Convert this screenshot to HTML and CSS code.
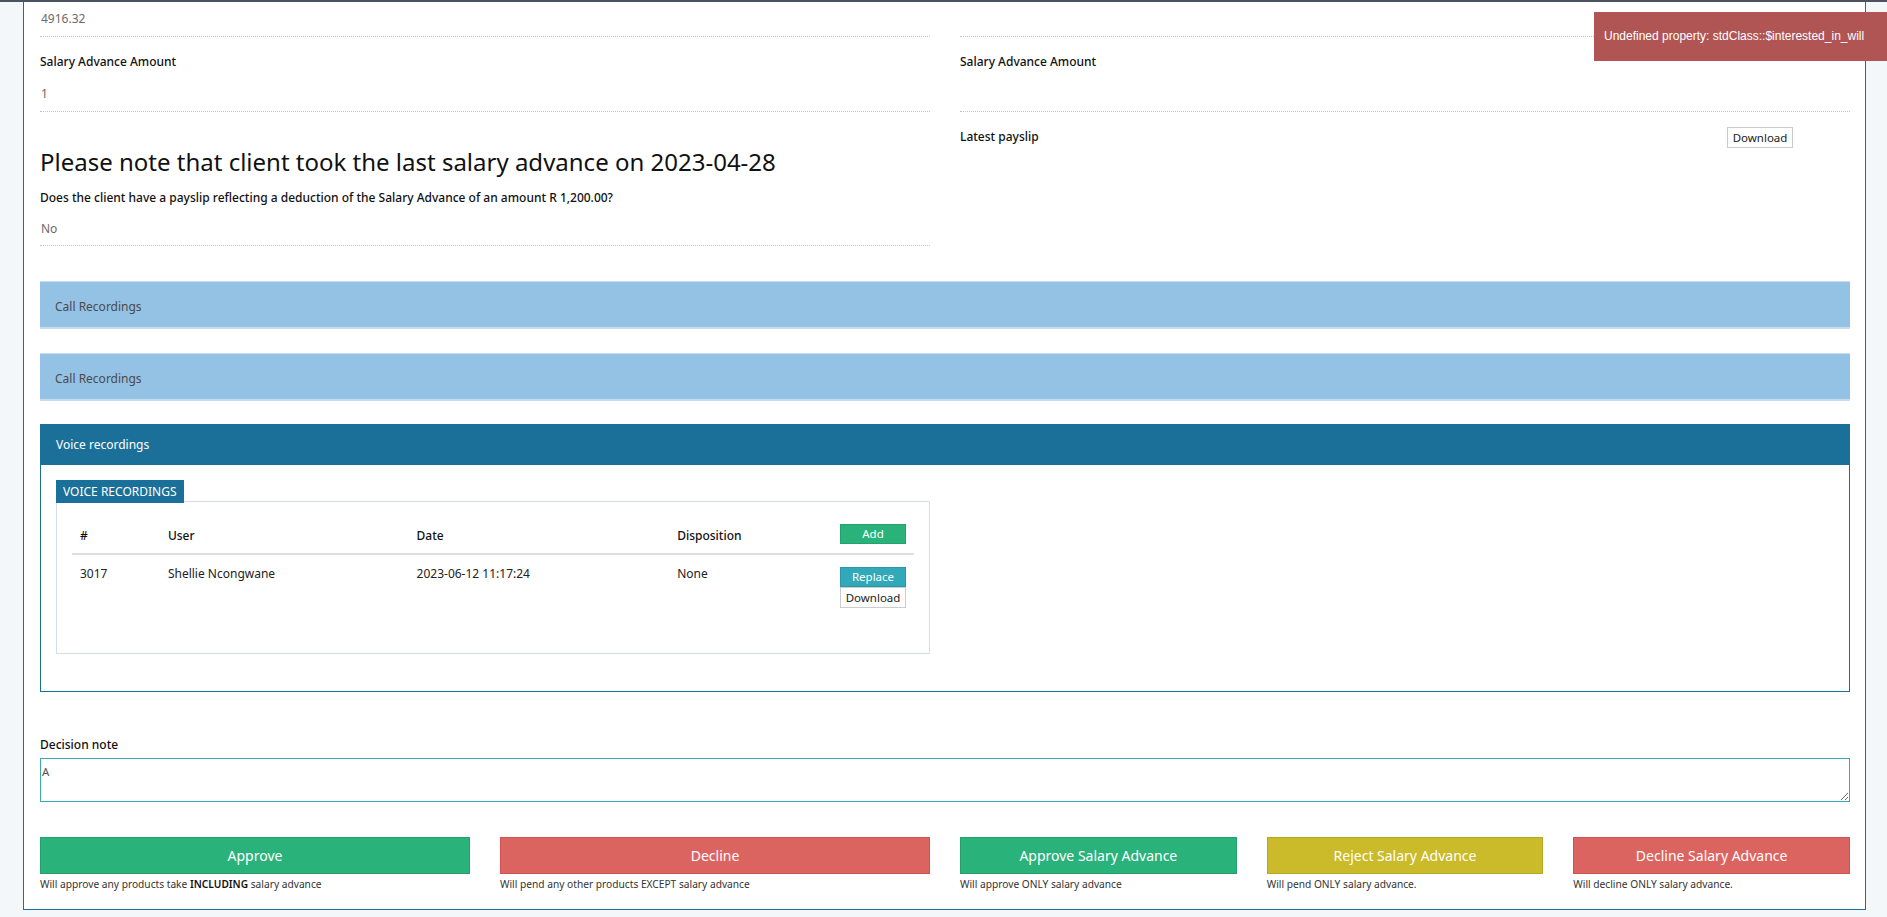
FILE: index.html
```html
<!DOCTYPE html>
<html lang="en">
<head>
<meta charset="utf-8">
<title>Salary Advance Review</title>
<link rel="stylesheet" href="styles.css">
</head>
<body>
<div class="toast">Undefined property: stdClass::$interested_in_will</div>
<main class="sheet">
  <div class="cols">
    <div class="col">
      <div class="field field-first"><div class="value">4916.32</div></div>
      <div class="field"><div class="label">Salary Advance Amount</div><div class="value">1</div></div>
      <h3 class="notice">Please note that client took the last salary advance on 2023-04-28</h3>
      <div class="field field-q"><div class="label">Does the client have a payslip reflecting a deduction of the Salary Advance of an amount R 1,200.00?</div><div class="value">No</div></div>
    </div>
    <div class="col">
      <div class="field field-first"><div class="value"></div></div>
      <div class="field"><div class="label">Salary Advance Amount</div><div class="value"></div></div>
      <div class="payslip"><span class="label payslip-label">Latest payslip</span><button class="btn btn-default">Download</button></div>
    </div>
  </div>

  <div class="bar">Call Recordings</div>
  <div class="bar">Call Recordings</div>

  <section class="panel">
    <div class="panel-head">Voice recordings</div>
    <div class="panel-body">
      <div class="fieldset">
        <div class="legend">VOICE RECORDINGS</div>
        <div class="box">
          <table class="rec-table">
            <thead>
              <tr>
                <th class="c-id">#</th>
                <th class="c-user">User</th>
                <th class="c-date">Date</th>
                <th class="c-disp">Disposition</th>
                <th class="c-act"><button class="btn btn-green btn-xs">Add</button></th>
              </tr>
            </thead>
            <tbody>
              <tr>
                <td>3017</td>
                <td>Shellie Ncongwane</td>
                <td>2023-06-12 11:17:24</td>
                <td>None</td>
                <td class="act-cell">
                  <button class="btn btn-teal btn-xs">Replace</button>
                  <button class="btn btn-default btn-xs">Download</button>
                </td>
              </tr>
            </tbody>
          </table>
        </div>
      </div>
      <div></div>
    </div>
  </section>

  <div class="note">
    <label class="label" for="note">Decision note</label>
    <textarea id="note" class="note-input">A</textarea>
  </div>

  <div class="actions">
    <div class="action-group two">
      <div class="action">
        <button class="btn btn-big btn-green">Approve</button>
        <p class="help">Will approve any products take <b>INCLUDING</b> salary advance</p>
      </div>
      <div class="action">
        <button class="btn btn-big btn-red">Decline</button>
        <p class="help">Will pend any other products EXCEPT salary advance</p>
      </div>
    </div>
    <div class="action-group three">
      <div class="action">
        <button class="btn btn-big btn-green">Approve Salary Advance</button>
        <p class="help">Will approve ONLY salary advance</p>
      </div>
      <div class="action">
        <button class="btn btn-big btn-yellow">Reject Salary Advance</button>
        <p class="help">Will pend ONLY salary advance.</p>
      </div>
      <div class="action">
        <button class="btn btn-big btn-red">Decline Salary Advance</button>
        <p class="help">Will decline ONLY salary advance.</p>
      </div>
    </div>
  </div>
</main>
</body>
</html>
```

FILE: styles.css
```css
* { box-sizing: border-box; }

html, body { margin: 0; padding: 0; }

body {
  background: #f3f7fa;
  border-top: 2px solid #4b5260;
  font-family: "Noto Sans", "Open Sans", "DejaVu Sans", sans-serif;
  font-size: 12px;
  line-height: 20px;
  color: #333;
  height: 917px;
  overflow: hidden;
}

.toast {
  position: absolute;
  top: 12px;
  right: 0;
  width: 293px;
  height: 49px;
  padding: 0 10px;
  background: #b05553;
  color: #fff;
  font-family: "Liberation Sans", Arial, sans-serif;
  font-size: 12px;
  line-height: 49px;
  white-space: nowrap;
  z-index: 10;
}

.sheet {
  display: block;
  margin: 0 21px 0 23px;
  background: #fff;
  border: 1px solid #1c6f9c;
  border-top: none;
  padding: 0 15px 17px 16px;
}

.cols {
  display: grid;
  grid-template-columns: 1fr 1fr;
  column-gap: 30px;
}

.field {
  padding: 15px 0 7px;
  border-bottom: 1px dotted #c4c4c4;
}
.field-first { padding-top: 6px; }

.label {
  display: block;
  font-size: 12px;
  font-weight: 500;
  color: #111;
  line-height: 20px;
}
.field .label { margin-bottom: 11px; }

.value {
  color: #6a6a6a;
  min-height: 21px;
  padding: 1px 0 0 1px;
}

.notice {
  margin: 37px 0 0;
  font-size: 24px;
  line-height: 26px;
  font-weight: 400;
  color: #111;
}

.field-q { padding-top: 13px; padding-bottom: 6px; }
.field-q .label { margin-bottom: 10px; }

.payslip {
  display: flex;
  align-items: flex-start;
  padding-top: 15px;
}
.payslip-label { width: 767px; }

.btn {
  display: inline-block;
  font-family: inherit;
  border: 1px solid transparent;
  cursor: pointer;
  margin: 0;
}
.btn-default {
  background: #fff;
  border-color: #ccc;
  color: #222;
  font-size: 11.5px;
  line-height: 19px;
  height: 21px;
  width: 66px;
  padding: 0;
}
.btn-green { background: #2ab27b; border-color: #25a06e; color: #fff; }
.btn-red { background: #dc6460; border-color: #cf534f; color: #fff; }
.btn-yellow { background: #cbba29; border-color: #b8a81f; color: #fff; }
.btn-teal { background: #31a9b8; border-color: #2a98a6; color: #fff; }

.btn-xs {
  display: block;
  width: 66px;
  height: 20px;
  padding: 0;
  font-size: 11.5px;
  line-height: 18px;
}
.btn-xs.btn-default { height: 21px; line-height: 19px; }

.bar {
  margin-top: 35px;
  background: #94c2e5;
  border-top: 1px solid #c8dcee;
  border-bottom: 2px solid #c8dcee;
  padding: 15px 15px 9px;
  color: #4a4a4a;
  line-height: 20px;
  height: 48px;
}
.bar + .bar { margin-top: 24px; }

.panel {
  margin-top: 23px;
  border: 1px solid #1b7099;
}
.panel-head {
  background: #1b7099;
  color: #fff;
  height: 40px;
  padding: 10px 15px 0;
  line-height: 20px;
}
.panel-body {
  display: grid;
  grid-template-columns: 1fr 1fr;
  column-gap: 30px;
  padding: 15px 15px 37px;
}

.legend {
  position: relative;
  z-index: 1;
  display: inline-block;
  background: #1b7099;
  color: #fff;
  font-size: 12px;
  line-height: 23px;
  height: 23px;
  padding: 0 7px;
  margin-bottom: -2px;
  vertical-align: top;
}
.box {
  border: 1px solid #d3dfe9;
  padding: 15px 15px 37px;
}

.rec-table {
  width: 100%;
  border-collapse: collapse;
  color: #222;
}
.rec-table th, .rec-table td {
  text-align: left;
  padding: 9px 8px 7px;
  line-height: 20px;
  vertical-align: top;
}
.rec-table th {
  font-weight: 500;
  color: #111;
  border-bottom: 2px solid #ddd;
}
.rec-table th.c-act { padding: 7px 8px 8px; }
.c-id { width: 88px; }
.c-user { width: 249px; }
.c-date { width: 261px; }
.c-disp { width: 163px; }
.rec-table .act-cell { padding-top: 12px; padding-bottom: 8px; }

.note { margin-top: 43px; }
.note .label { margin-bottom: 3px; }
.note-input {
  display: block;
  width: 100%;
  height: 44px;
  border: 1px solid #3ba8b8;
  padding: 4px 1px;
  font-family: inherit;
  font-size: 11.5px;
  line-height: 18px;
  color: #555;
  resize: vertical;
}

.actions {
  margin-top: 35px;
  display: grid;
  grid-template-columns: 1fr 1fr;
  column-gap: 30px;
}
.action-group { display: grid; column-gap: 30px; }
.action-group.two { grid-template-columns: 1fr 1fr; }
.action-group.three { grid-template-columns: 1fr 1fr 1fr; }

.btn-big {
  display: block;
  width: 100%;
  height: 37px;
  font-size: 14px;
  line-height: 20px;
  padding: 0;
}
.help {
  margin: 3px 0 0;
  font-size: 10.2px;
  line-height: 15px;
  color: #333;
}
.help b { font-weight: 600; color: #111; }
```
